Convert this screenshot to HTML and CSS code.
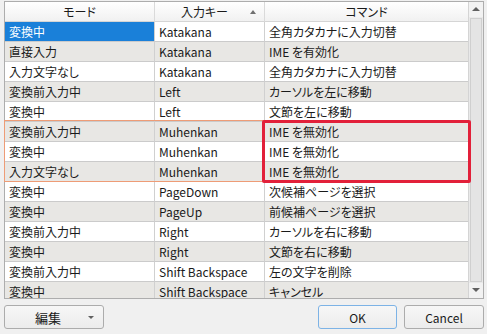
FILE: index.html
```html
<!DOCTYPE html>
<html lang="ja">
  <head>
    <meta charset="UTF-8" />
    <title>キー設定</title>
    <link rel="stylesheet" href="styles.css">
  </head>
  <body>
    <div class="dialog">
      <div class="grid-frame">
        <div class="grid-view">
          <table class="keymap">
            <thead>
              <tr>
                <th class="col-mode">モード</th>
                <th class="col-key sorted">入力キー<span class="sort-arrow"></span></th>
                <th class="col-cmd">コマンド</th>
              </tr>
            </thead>
            <tbody>
              <tr><td class="selected">変換中</td><td>Katakana</td><td>全角カタカナに入力切替</td></tr>
              <tr class="alt"><td>直接入力</td><td>Katakana</td><td>IME を有効化</td></tr>
              <tr><td>入力文字なし</td><td>Katakana</td><td>全角カタカナに入力切替</td></tr>
              <tr class="alt"><td>変換前入力中</td><td>Left</td><td>カーソルを左に移動</td></tr>
              <tr><td>変換中</td><td>Left</td><td>文節を左に移動</td></tr>
              <tr class="alt"><td>変換前入力中</td><td>Muhenkan</td><td>IME を無効化</td></tr>
              <tr><td>変換中</td><td>Muhenkan</td><td>IME を無効化</td></tr>
              <tr class="alt"><td>入力文字なし</td><td>Muhenkan</td><td>IME を無効化</td></tr>
              <tr><td>変換中</td><td>PageDown</td><td>次候補ページを選択</td></tr>
              <tr class="alt"><td>変換中</td><td>PageUp</td><td>前候補ページを選択</td></tr>
              <tr><td>変換前入力中</td><td>Right</td><td>カーソルを右に移動</td></tr>
              <tr class="alt"><td>変換中</td><td>Right</td><td>文節を右に移動</td></tr>
              <tr><td>変換前入力中</td><td>Shift Backspace</td><td>左の文字を削除</td></tr>
              <tr class="alt"><td>変換中</td><td>Shift Backspace</td><td>キャンセル</td></tr>
            </tbody>
          </table>
        </div>
        <div class="scrollbar">
          <div class="scroll-btn up"></div>
          <div class="scroll-thumb"></div>
          <div class="scroll-btn down"></div>
        </div>
      </div>

      <div class="button-bar">
        <button type="button" class="btn btn-menu">編集<span class="menu-arrow"></span></button>
        <div class="spacer"></div>
        <button type="button" class="btn btn-default">OK</button>
        <button type="button" class="btn">Cancel</button>
      </div>

      <!-- focus rect on the Muhenkan rows + annotation box -->
      <div class="row-focus"></div>
      <div class="mark-box"></div>
    </div>
  </body>
</html>
```

FILE: styles.css
```css
* {
  box-sizing: border-box;
}

body {
  margin: 0;
  background-color: #f0f0f0;
  font-family: "Noto Sans CJK JP", "Noto Sans", sans-serif;
  font-size: 12px;
  font-feature-settings: "palt";
  color: #1a1a1a;
}

.dialog {
  position: relative;
  width: 487px;
  height: 334px;
  padding: 1px 3px 0 4px;
}

.grid-frame {
  display: flex;
  height: 298px;
  border: 1px solid #adadad;
  background-color: #fff;
}

.grid-view {
  width: 464px;
  height: 296px;
  overflow: hidden;
}

.keymap {
  width: 464px;
  table-layout: fixed;
  border-collapse: separate;
  border-spacing: 0;
}

.keymap th,
.keymap td {
  padding: 0 4px;
  line-height: 19px;
  border-right: 1px solid #d0d0d0;
  border-bottom: 1px solid #cbcbcb;
  white-space: nowrap;
  overflow: hidden;
  text-align: left;
  font-weight: normal;
}

.keymap th {
  text-align: center;
  background: linear-gradient(#ffffff, #f1f1f1);
  border-right-color: #dadada;
  border-bottom-color: #d5d5d5;
  position: relative;
}

.col-mode {
  width: 150px;
}

.col-key {
  width: 110px;
}

.col-cmd {
  width: 204px;
}

.keymap th.col-key {
  padding-right: 14px;
}

.sort-arrow {
  position: absolute;
  right: 8px;
  top: 8px;
  border-left: 3px solid transparent;
  border-right: 3px solid transparent;
  border-bottom: 4px solid #707070;
}

.keymap tr.alt td {
  background-color: #e8e7e4;
}

.keymap td.selected {
  background-color: #1a80d9;
  color: #fff;
}

.scrollbar {
  width: 15px;
  display: flex;
  flex-direction: column;
  background-color: #e9e9e9;
  border-left: 1px solid #d4d4d4;
}

.scroll-btn {
  height: 15px;
  position: relative;
  background-color: #f2f2f2;
}

.scroll-btn::after {
  content: "";
  position: absolute;
  left: 3px;
  border-left: 4px solid transparent;
  border-right: 4px solid transparent;
}

.scroll-btn.up::after {
  top: 5px;
  border-bottom: 4px solid #606060;
}

.scroll-btn.down::after {
  top: 5px;
  border-top: 4px solid #606060;
}

.scroll-thumb {
  flex: 1;
  margin: 1px 1px;
  background-color: #e4e4e4;
  border: 1px solid #cfcfcf;
}

.button-bar {
  display: flex;
  gap: 7px;
  margin-top: 6px;
}

.spacer {
  flex: 1;
}

.btn {
  height: 24px;
  width: 80px;
  padding: 0;
  font-family: inherit;
  font-size: 12px;
  color: #1a1a1a;
  background: linear-gradient(#f7f7f7, #ececec);
  border: 1px solid #acacac;
  border-radius: 3px;
}

.btn-menu {
  width: 100px;
  position: relative;
  padding-right: 12px;
  font-size: 13px;
}

.menu-arrow {
  position: absolute;
  right: 9px;
  top: 10px;
  border-left: 3px solid transparent;
  border-right: 3px solid transparent;
  border-top: 3px solid #606060;
}

.btn-default {
  width: 79px;
  border-color: #7db3e6;
}

.row-focus {
  position: absolute;
  left: 4px;
  top: 120px;
  width: 465px;
  height: 62px;
  border: 1px solid #ee9c76;
}

.mark-box {
  position: absolute;
  left: 262px;
  top: 120px;
  width: 209px;
  height: 63px;
  border: 3px solid #e2203a;
  border-radius: 2px;
}
```
